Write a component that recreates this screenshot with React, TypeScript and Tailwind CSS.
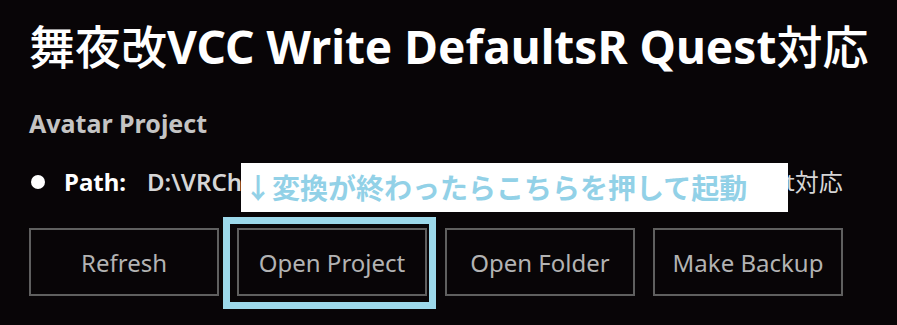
import React from 'react';

const font = { fontFamily: '"Noto Sans", "Noto Sans CJK JP", sans-serif' };

const buttons = ['Refresh', 'Open Project', 'Open Folder', 'Make Backup'];

export default function App() {
  return (
    <div
      className="w-full h-[325px] overflow-hidden bg-[#080507] pl-[29px] pt-[15px]"
      style={font}
    >
      {/* Title */}
      <h1 className="text-[46px] leading-[62px] font-bold text-white whitespace-nowrap">
        <span className="font-medium">舞夜改</span>VCC Write DefaultsR Quest
        <span className="font-medium">対応</span>
      </h1>

      {/* Project info */}
      <div className="mt-[31px] text-[25px] leading-[30px] font-bold text-[#c4c4c4]">
        Avatar Project
      </div>

      <div className="relative mt-[29px] flex items-center h-[30px] text-[24px] leading-[30px] whitespace-nowrap">
        <span className="ml-[2px] w-[14px] h-[14px] rounded-full bg-white" />
        <span className="ml-[19px] font-bold text-white">Path:</span>
        <span className="ml-[21px] font-semibold text-[#d6d6d6]">
          D:\VRCh
          <span className="font-normal">at\Unity\Avatar\舞夜改VCC Write DefaultsR Quest対応</span>
        </span>

        {/* annotation */}
        <div className="absolute left-[212px] top-[-4px] w-[547px] h-[49px] bg-white flex items-center pl-[3px]">
          <span className="text-[28px] leading-none font-bold text-[#92d1e7]">
            ↓変換が終わったらこちらを押して起動
          </span>
        </div>
      </div>

      {/* Actions */}
      <div className="mt-[31px] flex gap-[18px]">
        {buttons.map((label) => (
          <div key={label} className="relative">
            <button className="w-[190px] h-[68px] pt-[2px] border-2 border-[#5f5f5f] bg-[#080507] text-[24px] text-[#b3b3b3]">
              {label}
            </button>
            {label === 'Open Project' && (
              <div className="absolute left-[-14px] right-[-9px] top-[-11px] bottom-[-13px] border-[7px] border-[#9cd8ea] pointer-events-none" />
            )}
          </div>
        ))}
      </div>
    </div>
  );
}
